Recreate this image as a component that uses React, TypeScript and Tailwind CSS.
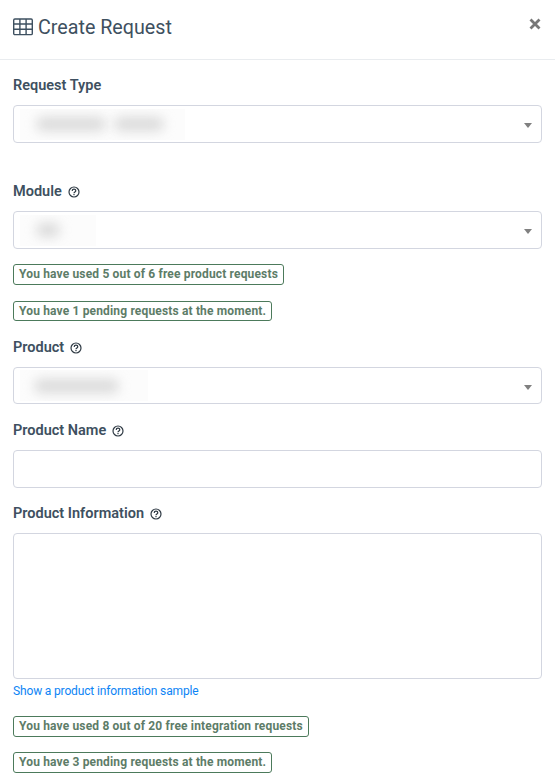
import React from "react";

function Help() {
  return (
    <svg width="12" height="12" viewBox="0 0 12 12" fill="none" className="shrink-0">
      <circle cx="6" cy="6" r="5" stroke="#2f3a44" strokeWidth="1.2" />
      <path d="M4.2 4.9c0-1 .8-1.7 1.8-1.7s1.8.7 1.8 1.6c0 1.2-1.8 1.2-1.8 2.4" stroke="#2f3a44" strokeWidth="1.2" />
      <rect x="5.4" y="8" width="1.2" height="1.2" fill="#2f3a44" />
    </svg>
  );
}

function Label({ text, help }: { text: string; help?: boolean }) {
  return (
    <div className="flex items-center h-[21px] text-[14.5px] text-[#3e5060]">
      <span className="font-semibold">{text}</span>
      {help && <span className="ml-[6px]"><Help /></span>}
    </div>
  );
}

function BlurSelect({ w, bars, h = "h-[38px]" }: { w: string; bars: string[]; h?: string }) {
  return (
    <div className={`relative ${h} rounded border border-[#d3d6e0] bg-white flex items-center pl-[6px]`}>
      <div className={`${w} h-[31px] bg-[#fcfcfc] flex items-center gap-[8px] pl-[14px] overflow-hidden`}>
        {bars.map((b, i) => (
          <div key={i} className={`${b} h-[14px] bg-[#dadada] blur-[6px] rounded-full`} />
        ))}
      </div>
      <div className="absolute right-[9px] top-1/2 -translate-y-[1px] w-0 h-0 border-l-[4px] border-r-[4px] border-t-[5px] border-l-transparent border-r-transparent border-t-[#808080]" />
    </div>
  );
}

function Badge({ text, className, tall }: { text: string; className?: string; tall?: boolean }) {
  return (
    <div className={`flex ${className ?? ""}`}>
      <span className={`${tall ? "h-[21px] pb-[1px]" : "h-[20px]"} flex items-center rounded-[3px] border border-[#4c7a5b] px-[5px] text-[12px] tracking-[0.16px] font-bold text-[#5d7c68] whitespace-nowrap`}>
        {text}
      </span>
    </div>
  );
}

export default function App() {
  return (
    <div className="w-[555px] h-[779px] overflow-hidden bg-white font-['Roboto',sans-serif]">
      <header className="h-[60px] border-b border-[#e9ecef] flex items-center justify-between pl-[13px] pr-[13px] pb-[5px]">
        <div className="flex items-center gap-[5px] text-[#3e5060]">
          <svg width="20" height="18" viewBox="0 0 20 18" fill="none" stroke="#3e5060" strokeWidth="1.4">
            <rect x="0.7" y="1" width="18.6" height="15.6" rx="1.2" />
            <path d="M0.7 6h18.6M0.7 11.2h18.6M6.9 1v15.6M13.1 1v15.6" />
          </svg>
          <h1 className="text-[19.7px] leading-none font-normal pt-[2px]">Create Request</h1>
        </div>
        <svg width="12" height="12" viewBox="0 0 12 12" className="mr-[1px] -mt-[6px]">
          <path d="M1.5 1.5l9 9M10.5 1.5l-9 9" stroke="#777" strokeWidth="2.8" />
        </svg>
      </header>
      <main className="px-[13px] pt-[15px]">
        <Label text="Request Type" />
        <div className="mt-[9px]">
          <BlurSelect w="w-[165px]" bars={["w-[70px] ml-[2px]", "w-[50px]"]} />
        </div>
        <div className="mt-[38px]"><Label text="Module" help /></div>
        <div className="mt-[9px]">
          <BlurSelect w="w-[76px]" bars={["w-[24px] ml-[2px]"]} />
        </div>
        <Badge tall text="You have used 5 out of 6 free product requests" className="mt-[15px]" />
        <Badge text="You have 1 pending requests at the moment." className="mt-[16px]" />
        <div className="mt-[16px]"><Label text="Product" help /></div>
        <div className="mt-[9px]">
          <BlurSelect w="w-[128px]" h="h-[37px]" bars={["w-[85px]"]} />
        </div>
        <div className="mt-[16px]"><Label text="Product Name" help /></div>
        <div className="mt-[9px] h-[38px] rounded border border-[#d3d6e0] bg-white" />
        <div className="mt-[15px]"><Label text="Product Information" help /></div>
        <div className="mt-[9px] h-[146px] rounded border border-[#d3d6e0] bg-white" />
        <a className="block mt-[4px] h-[16px] leading-[16px] text-[12px] tracking-[-0.15px] text-[#0d84f5]">Show a product information sample</a>
        <Badge tall text="You have used 8 out of 20 free integration requests" className="mt-[17px]" />
        <Badge tall text="You have 3 pending requests at the moment." className="mt-[15px]" />
      </main>
    </div>
  );
}
